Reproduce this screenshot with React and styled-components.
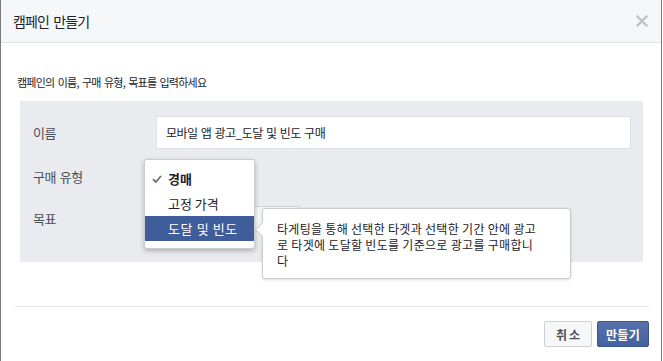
import React from "react";
import styled, { createGlobalStyle } from "styled-components";

const Global = createGlobalStyle`
  html, body { margin: 0; padding: 0; background: #ffffff; }
  body { font-family: "Noto Sans CJK KR", "Noto Sans", sans-serif; color: #1d2129; }
  * { box-sizing: border-box; }
`;

const Dialog = styled.div`
  width: 662px;
  height: 361px;
  background: #fff;
  border-left: 1px solid #7a7a7a;
  border-right: 1px solid #7a7a7a;
  display: flex;
  flex-direction: column;
`;

const Header = styled.div`
  height: 43px;
  background: #f6f7f9;
  border-bottom: 1px solid #e1e3e6;
  display: flex;
  align-items: center;
  justify-content: space-between;
  padding: 0 13px 0 12px;
`;

const Title = styled.h1`
  margin: 0;
  font-size: 14px;
  font-weight: 400;
  letter-spacing: -0.9px;
  word-spacing: 2px;
  color: #1d2129;
  line-height: 20px;
`;

const Close = styled.button`
  border: 0;
  background: none;
  padding: 0;
  width: 12px;
  height: 12px;
  display: flex;
  cursor: pointer;
`;

const Body = styled.div`
  padding: 31px 18px 0 16px;
  display: flex;
  flex-direction: column;
`;

const Intro = styled.p`
  margin: 0 0 11px 0;
  font-size: 11px;
  line-height: 16px;
  letter-spacing: -0.75px;
  word-spacing: 1.5px;
  color: #1d2129;
`;

const Panel = styled.div`
  margin-left: 3px;
  background: #e9ebee;
  padding: 15px 12px 29px 13px;
  display: grid;
  grid-template-columns: 123px 1fr;
  grid-auto-rows: 28px;
  grid-template-rows: 33px;
  row-gap: 14px;
  align-items: center;
`;

const Label = styled.div`
  font-size: 13px;
  letter-spacing: -0.4px;
  word-spacing: 1px;
  color: #4b4f56;
  line-height: 18px;
`;

const Field = styled.div`
  position: relative;
  height: 100%;
  display: flex;
  align-items: center;
`;

const TextInput = styled.input`
  width: 100%;
  height: 100%;
  border: 1px solid #dddfe2;
  background: #fff;
  padding: 0 9px;
  font-family: inherit;
  font-size: 12px;
  letter-spacing: -0.5px;
  word-spacing: 1px;
  color: #1d2129;
  outline: none;
`;

const SelectButton = styled.button`
  height: 26px;
  width: ${(p) => p.$width}px;
  border: 1px solid #ced0d4;
  border-radius: 2px;
  background: #f6f7f9;
  font-family: inherit;
  font-size: 12px;
  color: #4b4f56;
  text-align: left;
  padding: 0 8px;
  white-space: nowrap;
  overflow: hidden;
`;

const Menu = styled.div`
  position: absolute;
  left: -12px;
  top: -4px;
  width: 111px;
  padding: 6px 0 7px;
  background: #fff;
  border: 1px solid #c9ccd1;
  border-radius: 3px;
  box-shadow: 0 2px 5px rgba(0, 0, 0, 0.25);
  z-index: 3;
`;

const MenuItem = styled.div`
  height: 25px;
  display: flex;
  align-items: center;
  padding-left: 23px;
  position: relative;
  font-size: 13px;
  font-weight: ${(p) => (p.$bold ? 700 : 400)};
  color: ${(p) => (p.$active ? "#ffffff" : "#1d2129")};
  background: ${(p) => (p.$active ? "#3f5c9b" : "transparent")};
  letter-spacing: ${(p) => (p.$active ? "0.6px" : "0")};
`;

const Check = styled.svg`
  position: absolute;
  left: 7px;
  top: 9px;
`;

const Tooltip = styled.div`
  position: absolute;
  left: 117px;
  top: 48px;
  width: 309px;
  padding: 12px 10px 9px 14px;
  background: #fff;
  border: 1px solid #c9ccd1;
  border-radius: 3px;
  box-shadow: 0 1px 3px rgba(0, 0, 0, 0.15);
  font-size: 12px;
  line-height: 16px;
  letter-spacing: 0.3px;
  color: #1d2129;
  z-index: 4;
  &::before {
    content: "";
    position: absolute;
    left: -6px;
    top: 15px;
    width: 10px;
    height: 10px;
    background: #fff;
    border-left: 1px solid #c9ccd1;
    border-bottom: 1px solid #c9ccd1;
    transform: rotate(45deg);
  }
`;

const Footer = styled.div`
  margin: 44px 12px 0 14px;
  border-top: 1px solid #e1e3e6;
  padding-top: 14px;
  display: flex;
  justify-content: flex-end;
  gap: 5px;
`;

const Button = styled.button`
  height: 26px;
  padding: 0 ${(p) => (p.$primary ? 8 : 9)}px;
  border: 1px solid ${(p) => (p.$primary ? "#3b5590" : "#ced0d4")};
  border-radius: 2px;
  background: ${(p) =>
    p.$primary ? "linear-gradient(#5771ab, #4462a0)" : "#f6f7f9"};
  color: ${(p) => (p.$primary ? "#ffffff" : "#4b4f56")};
  font-family: inherit;
  font-size: 12px;
  font-weight: 700;
  letter-spacing: ${(p) => (p.$primary ? "0.3px" : "2px")};
  text-indent: ${(p) => (p.$primary ? "0" : "2px")};
`;

export default function App() {
  return (
    <>
      <Global />
      <Dialog>
        <Header>
          <Title>캠페인 만들기</Title>
          <Close aria-label="닫기">
            <svg width="12" height="12" viewBox="0 0 12 12">
              <path d="M1.5 1.5 L10.5 10.5 M10.5 1.5 L1.5 10.5" stroke="#bec2c9" strokeWidth="2.4" strokeLinecap="square" />
            </svg>
          </Close>
        </Header>
        <Body>
          <Intro>캠페인의 이름, 구매 유형, 목표를 입력하세요</Intro>
          <Panel>
            <Label>이름</Label>
            <Field>
              <TextInput defaultValue="모바일 앱 광고_도달 및 빈도 구매" />
            </Field>
            <Label>구매 유형</Label>
            <Field>
              <SelectButton $width={86} aria-label="구매 유형: 경매" />
              <Menu>
                <MenuItem $bold>
                  <Check width="10" height="8" viewBox="0 0 10 8">
                    <path d="M1 4.2 L3.8 7 L9 1" fill="none" stroke="#6b6f76" strokeWidth="1.8" />
                  </Check>
                  경매
                </MenuItem>
                <MenuItem>고정 가격</MenuItem>
                <MenuItem $active>도달 및 빈도</MenuItem>
                <Tooltip>
                  타게팅을 통해 선택한 타겟과 선택한 기간 안에 광고
                  <br />
                  로 타겟에 도달할 빈도를 기준으로 광고를 구매합니
                  <br />다
                </Tooltip>
              </Menu>
            </Field>
            <Label>목표</Label>
            <Field>
              <SelectButton $width={144}>인지도 및 도달률</SelectButton>
            </Field>
          </Panel>
        </Body>
        <Footer>
          <Button>취소</Button>
          <Button $primary>만들기</Button>
        </Footer>
      </Dialog>
    </>
  );
}
